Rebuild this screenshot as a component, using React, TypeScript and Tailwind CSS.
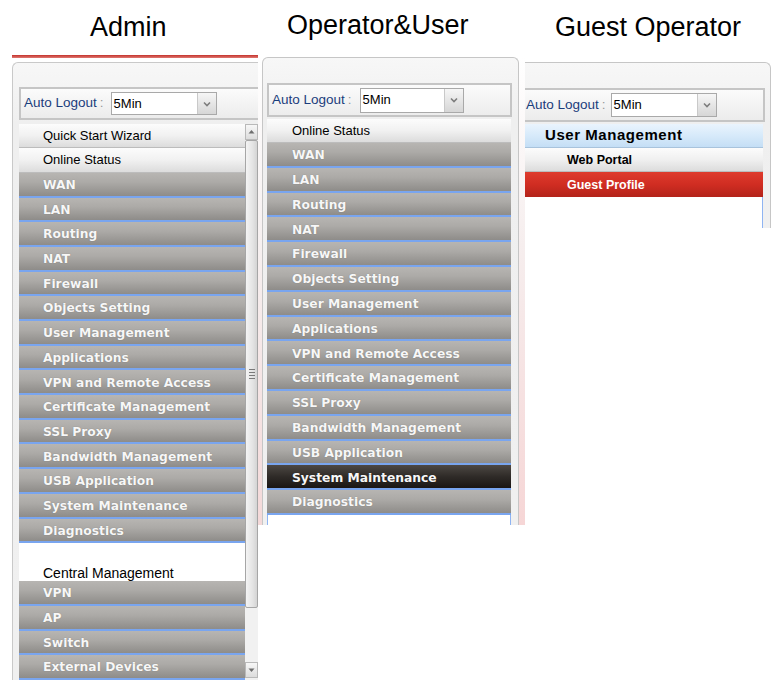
import React from "react";

const GRAY =
  "bg-[linear-gradient(to_bottom,#b7b5b2_0%,#acaaa7_40%,#8e8c89_100%)]";
const DARK =
  "bg-[linear-gradient(to_bottom,#4d4844_0%,#2f2b28_50%,#1a1614_100%)]";
const LIGHT =
  "bg-[linear-gradient(to_bottom,#fcfcfc_0%,#f1f1f1_50%,#dcdcdc_100%)]";

function GrayItem({ label, dark, pl, h }: { label: string; dark?: boolean; pl: string; h: string }) {
  return (
    <div
      className={`${h} shrink-0 flex items-center pt-[2px] border-b-2 border-[#79a5ef] ${
        dark ? DARK : GRAY
      } ${pl} font-['DejaVu_Sans',sans-serif] font-bold text-[12.3px] text-[#f7f7f7] [text-shadow:0_0_1px_rgba(0,0,0,0.3)] whitespace-nowrap`}
    >
      {label}
    </div>
  );
}

function LightItem({ label, pl, h }: { label: string; pl: string; h: string }) {
  return (
    <div
      className={`${h} shrink-0 flex items-center border-b border-[#bcbcbc] ${LIGHT} ${pl} text-[13px] text-black whitespace-nowrap`}
    >
      {label}
    </div>
  );
}

function Select({ w, h }: { w: string; h: string }) {
  return (
    <div className={`flex ${w} ${h} border border-[#a9a9a9] bg-white`}>
      <div className="flex-1 flex items-center pl-[2px] text-[13px] text-black">5Min</div>
      <div className="w-[19px] border-l border-[#c9c9c9] bg-[linear-gradient(to_bottom,#f6f6f6,#d6d6d6)] flex items-center justify-center">
        <svg width="8" height="6" viewBox="0 0 8 6">
          <path d="M1 1.5 L4 4.5 L7 1.5" stroke="#7d7d7d" strokeWidth="1.6" fill="none" />
        </svg>
      </div>
    </div>
  );
}

function Bar({
  className,
  pl,
  colonGap,
  selW,
  selH,
}: {
  className: string;
  pl: string;
  colonGap: string;
  selW: string;
  selH: string;
}) {
  return (
    <div
      className={`${className} shrink-0 flex items-center border-[#c5c5c5] bg-[linear-gradient(to_bottom,#fbfbfb,#ececec)] ${pl}`}
    >
      <span className="text-[13.5px] text-[#1b3d7c] whitespace-nowrap">Auto Logout</span>
      <span className="ml-[3px] text-[13.5px] text-[#9a9a9a]">:</span>
      <div className={colonGap}>
        <Select w={selW} h={selH} />
      </div>
    </div>
  );
}

const MENU = [
  "WAN",
  "LAN",
  "Routing",
  "NAT",
  "Firewall",
  "Objects Setting",
  "User Management",
  "Applications",
  "VPN and Remote Access",
  "Certificate Management",
  "SSL Proxy",
  "Bandwidth Management",
  "USB Application",
  "System Maintenance",
  "Diagnostics",
];

function Scrollbar() {
  return (
    <div className="w-[13px] flex flex-col pb-[2px]">
      <div className="h-[16px] shrink-0 border border-[#b9b9b9] bg-[linear-gradient(to_bottom,#f7f7f7,#dcdcdc)] flex items-center justify-center">
        <svg width="7" height="5" viewBox="0 0 7 5">
          <path d="M0.5 4.5 L3.5 1 L6.5 4.5 Z" fill="#6e6e6e" />
        </svg>
      </div>
      <div className="h-[468px] shrink-0 border border-[#a6a6a6] rounded-[2px] bg-[linear-gradient(to_right,#f4f4f4,#e4e4e4_60%,#d4d4d4)] flex items-center justify-center">
        <div className="flex flex-col gap-[2px]">
          <div className="w-[6px] h-px bg-[#7a7a7a]" />
          <div className="w-[6px] h-px bg-[#7a7a7a]" />
          <div className="w-[6px] h-px bg-[#7a7a7a]" />
          <div className="w-[6px] h-px bg-[#7a7a7a]" />
        </div>
      </div>
      <div className="flex-1 bg-[#f1f1f1]" />
      <div className="h-[16px] shrink-0 border border-[#b9b9b9] bg-[linear-gradient(to_bottom,#f7f7f7,#dcdcdc)] flex items-center justify-center">
        <svg width="7" height="5" viewBox="0 0 7 5">
          <path d="M0.5 0.5 L3.5 4 L6.5 0.5 Z" fill="#6e6e6e" />
        </svg>
      </div>
    </div>
  );
}

function AdminColumn() {
  return (
    <div className="ml-[12px] w-[246px] shrink-0 flex flex-col">
      <div className="h-[55px] pl-[78px] text-[27px] leading-[54px] text-black whitespace-nowrap">Admin</div>
      <div className="h-[3px] bg-[linear-gradient(to_bottom,#c4312b,#df7a74)]" />
      <div className="h-[4px]" />
      <div className="h-[618px] border-l border-t border-[#c9c9c9] rounded-tl-[6px] bg-[linear-gradient(to_bottom,#f7f7f7,#efefef_60px,#f0f0f0)] flex flex-col overflow-hidden">
        <div className="h-[24px] shrink-0" />
        <div className="ml-[6px]">
          <Bar
            className="h-[33px] border-y-2 border-l-2"
            pl="pl-[3px]"
            colonGap="ml-[7px]"
            selW="w-[106px]"
            selH="h-[23px]"
          />
        </div>
        <div className="h-[3.5px] shrink-0" />
        <div className="flex-1 flex min-h-0">
          <div className="ml-[6px] w-[226px] flex flex-col overflow-hidden">
            <LightItem label="Quick Start Wizard" pl="pl-[24px]" h="h-[24.7px]" />
            <LightItem label="Online Status" pl="pl-[24px]" h="h-[24.7px]" />
            {MENU.map((m) => (
              <GrayItem key={m} label={m} pl="pl-[24px]" h="h-[24.7px]" />
            ))}
            <div className="h-[38px] shrink-0 bg-white flex items-end pl-[24px] text-[14px] leading-[16px] text-black whitespace-nowrap">
              Central Management
            </div>
            {["VPN", "AP", "Switch", "External Devices"].map((m) => (
              <GrayItem key={m} label={m} pl="pl-[24px]" h="h-[24.7px]" />
            ))}
          </div>
          <Scrollbar />
        </div>
      </div>
    </div>
  );
}

function OperatorColumn() {
  return (
    <div className="w-[267px] shrink-0 flex flex-col">
      <div className="h-[57px] pl-[29px] text-[27px] leading-[50px] text-black whitespace-nowrap">Operator&amp;User</div>
      <div className="h-[468px] flex">
        <div className="w-[4px] bg-[linear-gradient(to_bottom,#ffffff,#f6f0f0_40%,#f4d9d9)]" />
        <div className="w-[257px] border-x border-t border-[#c6c6c6] rounded-t-[6px] bg-[linear-gradient(to_bottom,#f7f7f7,#efefef_60px,#f0f0f0)] flex flex-col overflow-hidden">
          <div className="h-[25px] shrink-0" />
          <div className="ml-[4px] w-[245px]">
            <Bar
              className="h-[34px] border-2"
              pl="pl-[3px]"
              colonGap="ml-[8px]"
              selW="w-[104px]"
              selH="h-[25px]"
            />
          </div>
          <div className="h-[1.5px] shrink-0" />
          <div className="ml-[4px] w-[244px] flex-1 flex flex-col min-h-0">
            <LightItem label="Online Status" pl="pl-[25px]" h="h-[24.5px]" />
            {MENU.map((m) => (
              <GrayItem
                key={m}
                label={m}
                dark={m === "System Maintenance"}
                pl="pl-[25px]"
                h="h-[24.8px]"
              />
            ))}
            <div className="flex-1 bg-white border-x border-[#8fb4f2]" />
          </div>
        </div>
        <div className="w-[6px] bg-[linear-gradient(to_bottom,#ffffff,#f6eeee_40%,#f6d6d6)]" />
      </div>
    </div>
  );
}

function GuestColumn() {
  return (
    <div className="w-[250px] shrink-0 flex flex-col">
      <div className="h-[62px] pl-[30px] text-[27px] leading-[54px] text-black whitespace-nowrap">Guest Operator</div>
      <div className="w-[246px] h-[166px] border-t border-r border-[#c6c6c6] rounded-tr-[6px] bg-[linear-gradient(to_bottom,#f7f7f7,#efefef_60px,#f0f0f0)] flex flex-col overflow-hidden">
        <div className="h-[25px] shrink-0" />
        <div className="w-[240px]">
          <Bar
            className="h-[34px] border-y-2 border-r-2"
            pl="pl-[1px]"
            colonGap="ml-[5px]"
            selW="w-[106px]"
            selH="h-[24px]"
          />
        </div>
        <div className="h-[1.5px] shrink-0" />
        <div className="w-[238px] flex-1 flex flex-col min-h-0">
          <div className="h-[24px] shrink-0 flex items-center pt-[1px] border-b border-[#a8c3dc] bg-[linear-gradient(to_bottom,#eaf4fd,#d7eafa_50%,#c4def5)] pl-[20px] text-[15px] font-bold tracking-[0.55px] text-black whitespace-nowrap">
            User Management
          </div>
          <div className="h-[24.5px] shrink-0 flex items-center pt-[2px] border-b border-[#bcbcbc] bg-[linear-gradient(to_bottom,#fcfcfc,#f0f0f0_50%,#dcdcdc)] pl-[42px] text-[12.5px] font-bold text-black whitespace-nowrap">
            Web Portal
          </div>
          <div className="h-[25px] shrink-0 flex items-center pt-[1px] bg-[linear-gradient(to_bottom,#de3b2d,#d02d22_50%,#b3231a)] pl-[42px] text-[12.5px] font-bold text-white whitespace-nowrap">
            Guest Profile
          </div>
          <div className="flex-1 bg-white border-r border-[#8fb4f2]" />
        </div>
      </div>
    </div>
  );
}

export default function App() {
  return (
    <div className="w-[775px] h-[686px] bg-white overflow-hidden font-['Liberation_Sans',Arial,sans-serif] flex items-start">
      <AdminColumn />
      <OperatorColumn />
      <GuestColumn />
    </div>
  );
}
